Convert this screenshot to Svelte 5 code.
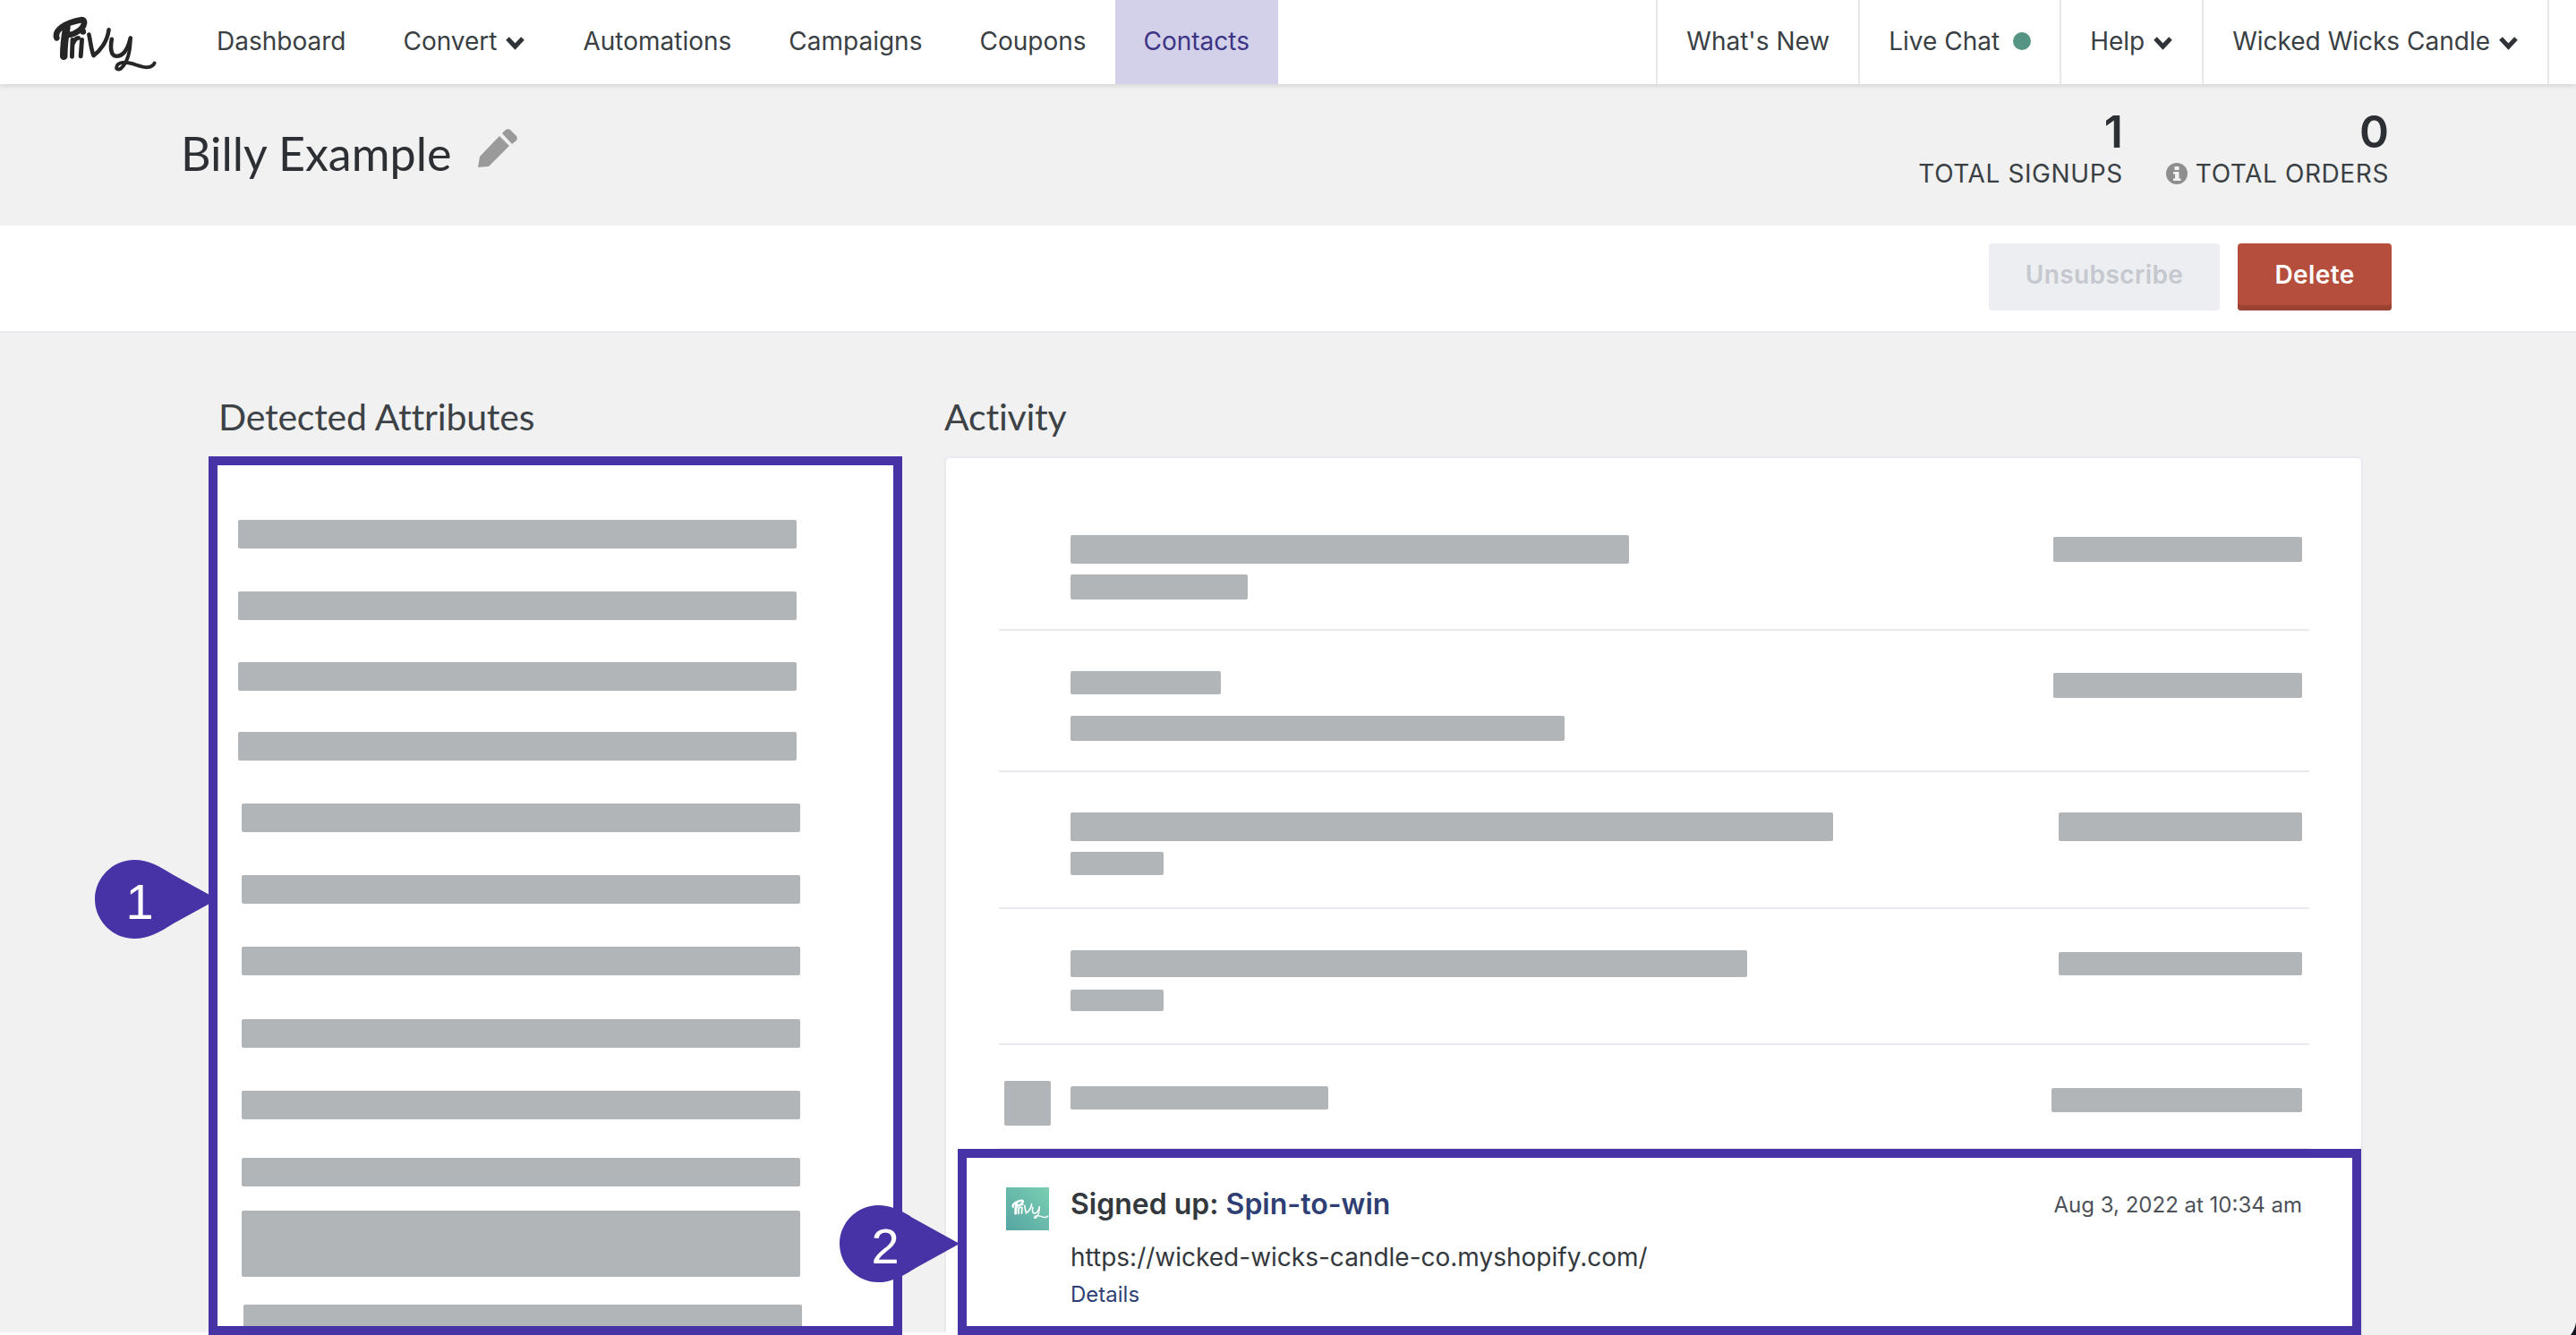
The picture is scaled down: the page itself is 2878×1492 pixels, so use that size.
<script>
  const navLeft = ['Dashboard', 'Convert', 'Automations', 'Campaigns', 'Coupons', 'Contacts'];
  const attrBars = [
    { ml: 23, mt: 71, h: 32 }, { ml: 23, mt: 48, h: 32 }, { ml: 23, mt: 47, h: 32 }, { ml: 23, mt: 46, h: 32 },
    { ml: 27, mt: 48, h: 32 }, { ml: 27, mt: 48, h: 32 }, { ml: 27, mt: 48, h: 32 }, { ml: 27, mt: 49, h: 32 },
    { ml: 27, mt: 48, h: 32 }, { ml: 27, mt: 43, h: 32 }, { ml: 27, mt: 27, h: 74 }, { ml: 29, mt: 31, h: 40 }
  ];
  const rows = [
    { height: 193, left: [{ w: 624, h: 32, mt: 86 }, { w: 198, h: 28, mt: 12 }], right: { w: 278, h: 28, mt: 88 } },
    { height: 158, left: [{ w: 168, h: 26, mt: 45 }, { w: 552, h: 28, mt: 24 }], right: { w: 278, h: 28, mt: 47 } },
    { height: 153, left: [{ w: 852, h: 32, mt: 45 }, { w: 104, h: 26, mt: 12 }], right: { w: 272, h: 32, mt: 45 } },
    { height: 152, left: [{ w: 756, h: 30, mt: 46 }, { w: 104, h: 24, mt: 14 }], right: { w: 272, h: 26, mt: 48 } },
    { height: 117, square: true, left: [{ w: 288, h: 26, mt: 46 }], right: { w: 280, h: 27, mt: 48 } }
  ];
  const logoStrokes = [
    { d: 'M126 124C116 96 156 72 208 62C226 58 224 84 200 100C186 110 172 114 162 112', w: 20 },
    { d: 'M160 86C154 118 150 150 150 186', w: 26 },
    { d: 'M180 130L178 188M180 146C186 130 192 124 200 124', w: 15 },
    { d: 'M212 130L208 186', w: 15 },
    { d: 'M216 102L216 103', w: 20 },
    { d: 'M236 112C242 140 244 165 252 184C272 170 298 140 304 96', w: 14 },
    { d: 'M314 128C308 160 312 186 330 186C354 186 370 158 378 124', w: 14 },
    { d: 'M378 124C378 170 366 208 346 228C324 240 324 212 352 208C382 204 410 226 438 224C450 222 456 218 460 210', w: 12 }
  ];
</script>

{#snippet chevron()}
  <svg class="chev" viewBox="0 0 23 16" aria-hidden="true"><path d="M3 3L11.5 12L20 3" /></svg>
{/snippet}

{#snippet logo(cls)}
  <svg class={cls} viewBox="110 40 360 205" aria-hidden="true">
    {#each logoStrokes as s}
      <path d={s.d} stroke-width={s.w} />
    {/each}
  </svg>
{/snippet}

<div class="page">
  <header class="topbar">
    <div class="brand">{@render logo('logo')}</div>
    <nav class="nav-left">
      {#each navLeft as item}
        <span class="nav-item" class:active={item === 'Contacts'}>
          {item}
          {#if item === 'Convert'}{@render chevron()}{/if}
        </span>
      {/each}
    </nav>
    <nav class="nav-right">
      <span class="nav-cell">What's New</span>
      <span class="nav-cell">Live Chat <i class="dot"></i></span>
      <span class="nav-cell">Help {@render chevron()}</span>
      <span class="nav-cell last">Wicked Wicks Candle {@render chevron()}</span>
    </nav>
  </header>

  <section class="profile">
    <div class="who">
      <h1>Billy Example</h1>
      <svg class="pencil" viewBox="0 0 44 44" aria-hidden="true">
        <path d="M0 43L2 31L24 8L35 19L12 42Z" />
        <path d="M27 5L31 1C33 0 35 0 36 1L43 8C44 10 44 11 43 13L38 17Z" />
      </svg>
    </div>
    <div class="stats">
      <div class="stat">
        <b>1</b>
        <span>TOTAL SIGNUPS</span>
      </div>
      <div class="stat">
        <b>0</b>
        <span>
          <svg class="info" viewBox="0 0 24 24" aria-hidden="true">
            <circle cx="12" cy="12" r="12" />
            <rect x="9.5" y="4" width="5" height="4" fill="#f1f1f1" />
            <path d="M8 10H14.5V17.5H16.5V20H8V17.5H10V12.5H8Z" fill="#f1f1f1" />
          </svg>
          TOTAL ORDERS
        </span>
      </div>
    </div>
  </section>

  <section class="actions">
    <button class="btn ghost">Unsubscribe</button>
    <button class="btn danger">Delete</button>
  </section>

  <main class="content">
    <section class="col-attrs">
      <h2>Detected Attributes</h2>
      <div class="attr-card">
        {#each attrBars as b}
          <div class="bar attr-bar" style="margin-left:{b.ml}px;margin-top:{b.mt}px;height:{b.h}px"></div>
        {/each}
      </div>
    </section>

    <section class="col-activity">
      <h2>Activity</h2>
      <div class="activity-card">
        {#each rows as r}
          <div class="row" style="height:{r.height}px">
            <div class="icon-col">
              {#if r.square}<div class="bar square"></div>{/if}
            </div>
            <div class="main-col">
              {#each r.left as b}
                <div class="bar" style="width:{b.w}px;height:{b.h}px;margin-top:{b.mt}px"></div>
              {/each}
            </div>
            <div class="bar" style="width:{r.right.w}px;height:{r.right.h}px;margin-top:{r.right.mt}px"></div>
          </div>
        {/each}
        <div class="row event">
          <div class="icon-col">
            <div class="brand-tile">{@render logo('tile-logo')}</div>
          </div>
          <div class="main-col">
            <div class="event-title">Signed up: <a href="#top">Spin-to-win</a></div>
            <div class="event-url">https://wicked-wicks-candle-co.myshopify.com/</div>
            <a class="event-details" href="#top">Details</a>
          </div>
          <time>Aug 3, 2022 at 10:34 am</time>
        </div>
      </div>
    </section>
  </main>

  <div class="strip"></div>
  <div class="mark box-one"></div>
  <div class="mark box-two"></div>

  <div class="callout callout-one">
    <svg viewBox="0 0 137 88" aria-hidden="true"><path d="M137 44L88 17C72 7 60 0 44 0C20 0 0 20 0 44C0 68 20 88 44 88C60 88 72 81 88 71Z" /></svg>
    <span>1</span>
  </div>
  <div class="callout callout-two">
    <svg viewBox="0 0 137 88" aria-hidden="true"><path d="M137 44L88 17C72 7 60 0 44 0C20 0 0 20 0 44C0 68 20 88 44 88C60 88 72 81 88 71Z" /></svg>
    <span>2</span>
  </div>

  <svg class="corner" viewBox="0 0 6 14" aria-hidden="true"><path d="M6 0C5 6 3 10 0 14H6Z" /></svg>
</div>

<style>
  :global(body) { margin: 0; }
  .page {
    position: relative;
    width: 2878px;
    height: 1492px;
    overflow: hidden;
    background: #f1f1f1;
    font-family: Inter, "Liberation Sans", sans-serif;
    color: #33383d;
  }

  .topbar {
    position: relative;
    z-index: 1;
    display: flex;
    height: 94px;
    background: #fff;
    box-shadow: 0 2px 6px rgba(0, 0, 0, 0.12);
    font-size: 28px;
    color: #3a3f44;
  }
  .brand { width: 210px; flex: none; padding: 15px 0 0 58px; box-sizing: border-box; }
  .logo { display: block; width: 118px; height: 67px; stroke: #262626; }
  .logo path, .tile-logo path { fill: none; stroke-linecap: round; stroke-linejoin: round; }
  .nav-left { display: flex; }
  .nav-item {
    display: flex;
    align-items: center;
    gap: 9px;
    padding: 0 32px 2px;
    white-space: nowrap;
  }
  .nav-item.active { background: #d3d0e9; color: #3c3585; }
  .nav-right { display: flex; margin-left: auto; margin-right: 30px; }
  .nav-cell {
    display: flex;
    align-items: center;
    gap: 9px;
    padding: 0 32px 2px;
    border-left: 2px solid #e8e8e8;
    white-space: nowrap;
  }
  .nav-cell.last { border-right: 2px solid #e8e8e8; }
  .chev { width: 23px; height: 16px; margin-top: 4px; }
  .chev path { fill: none; stroke: #2f3337; stroke-width: 5; }
  .dot { width: 20px; height: 20px; margin-left: 6px; border-radius: 50%; background: #559482; }

  .profile {
    display: flex;
    justify-content: space-between;
    height: 158px;
    box-sizing: border-box;
    padding: 0 209px 0 202px;
  }
  .who { display: flex; align-items: flex-start; gap: 30px; padding-top: 48px; }
  h1 {
    margin: 0;
    font: 400 52px/58px Lato, "Open Sans", sans-serif;
    color: #2c2f33;
  }
  .pencil { width: 44px; height: 44px; margin-top: 2px; fill: #9a9a9a; }
  .stats { display: flex; gap: 48px; padding-top: 28px; }
  .stat { display: flex; flex-direction: column; align-items: flex-end; }
  .stat b { font-size: 50px; line-height: 50px; font-weight: 600; color: #2c2f33; }
  .stat span { display: flex; align-items: center; gap: 9px; margin-top: 2px; font-size: 28px; line-height: 40px; letter-spacing: 0.6px; color: #3a3f44; }
  .info { width: 24px; height: 24px; fill: #8e8e8e; }

  .actions {
    display: flex;
    justify-content: flex-end;
    gap: 20px;
    height: 120px;
    box-sizing: border-box;
    padding: 20px 206px 0 0;
    background: #fff;
    border-bottom: 2px solid #e8e8ee;
  }
  .btn {
    height: 75px;
    padding: 0 0 5px;
    border: 0;
    border-radius: 4px;
    font: 600 28px Inter, sans-serif;
    letter-spacing: 0.4px;
  }
  .ghost { width: 258px; background: #eceef1; color: #c5c8ce; }
  .danger { width: 172px; background: #b54e3c; color: #fff; box-shadow: inset 0 -6px 0 #9c4233; }

  .content {
    display: flex;
    padding-left: 243px;
    height: 1120px;
    overflow: hidden;
  }
  h2 {
    margin: 0;
    height: 138px;
    box-sizing: border-box;
    padding-top: 70px;
    font: 400 41px/48px Lato, "Open Sans", sans-serif;
    letter-spacing: -0.2px;
    color: #3d4246;
  }
  .col-attrs { width: 812px; flex: none; }
  .col-attrs h2 { padding-left: 1px; }
  .attr-card { width: 756px; height: 982px; background: #fff; overflow: hidden; }
  .bar { background: #b1b5b7; border-radius: 2px; flex: none; }
  .attr-bar { width: 624px; }

  .col-activity { width: 1585px; flex: none; }
  .activity-card {
    height: 982px;
    box-sizing: border-box;
    padding: 0 58px 0 59px;
    background: #fff;
    border: 2px solid #e9e9ef;
    border-bottom: 0;
    border-radius: 6px 6px 0 0;
  }
  .row {
    display: flex;
    box-sizing: border-box;
    padding-right: 8px;
    border-bottom: 2px solid #e9e9ef;
  }
  .row.event { border-bottom: 0; }
  .icon-col { width: 80px; flex: none; }
  .main-col { flex: 1; min-width: 0; }
  .square { width: 52px; height: 50px; margin: 40px 0 0 6px; }
  .brand-tile {
    width: 48px;
    height: 48px;
    margin: 42px 0 0 8px;
    display: flex;
    align-items: center;
    justify-content: flex-end;
    background: linear-gradient(to top right, #55a4a2, #7bcfb2);
  }
  .tile-logo { width: 42px; height: 24px; stroke: #fff; }
  .event-title { margin-top: 41px; font-size: 32px; line-height: 40px; font-weight: 600; color: #33383d; }
  .event-title a, .event-details { color: #2f3f74; text-decoration: none; }
  .event-url { margin-top: 19px; font-size: 28px; line-height: 40px; color: #33383d; }
  .event-details { display: block; margin-top: 4px; font-size: 24px; line-height: 36px; }
  time { margin-top: 44px; font-size: 24px; line-height: 36px; color: #4c5159; white-space: nowrap; }

  .strip { position: absolute; left: 0; right: 1820px; bottom: 0; height: 3px; background: #fff; }

  .mark { position: absolute; box-sizing: border-box; border: 10px solid #4833a6; }
  .box-one { left: 233px; top: 510px; width: 775px; height: 982px; }
  .box-two { left: 1070px; top: 1284px; width: 1568px; height: 208px; }

  .callout { position: absolute; display: flex; }
  .callout svg { display: block; width: 100%; height: 100%; fill: #4833a6; }
  .callout span {
    position: absolute;
    top: calc(50% + 3px);
    transform: translate(-50%, -50%);
    font: 400 56px/1 "Liberation Sans", Arial, sans-serif;
    color: #fff;
  }
  .callout-one { left: 106px; top: 961px; width: 137px; height: 88px; }
  .callout-one span { left: 50px; }
  .callout-two { left: 938px; top: 1345px; width: 134px; height: 90px; }
  .callout-two span { left: 51px; }

  .corner { position: absolute; right: 0; bottom: 0; width: 6px; height: 14px; fill: #14131f; }
</style>
